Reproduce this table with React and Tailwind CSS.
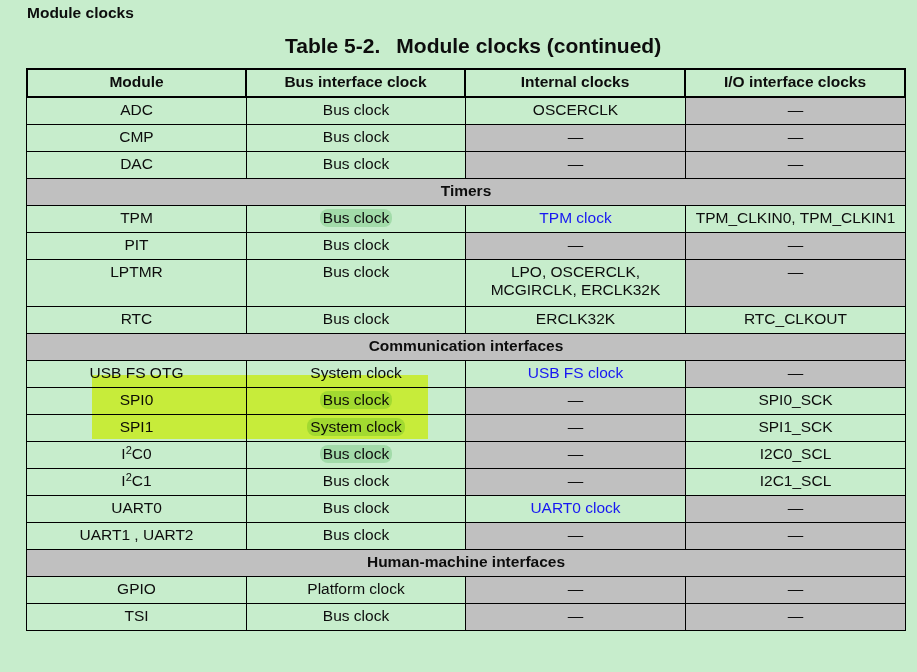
import React from "react";

const rows = [
  { c: [{ t: "ADC" }, { t: "Bus clock" }, { t: "OSCERCLK" }, { t: "—", g: 1 }] },
  { c: [{ t: "CMP" }, { t: "Bus clock" }, { t: "—", g: 1 }, { t: "—", g: 1 }] },
  { c: [{ t: "DAC" }, { t: "Bus clock" }, { t: "—", g: 1 }, { t: "—", g: 1 }] },
  { section: "Timers" },
  { c: [{ t: "TPM" }, { t: "Bus clock", pill: 1 }, { t: "TPM clock", b: 1 }, { t: "TPM_CLKIN0, TPM_CLKIN1" }] },
  { c: [{ t: "PIT" }, { t: "Bus clock" }, { t: "—", g: 1 }, { t: "—", g: 1 }] },
  {
    tall: 1,
    c: [
      { t: "LPTMR" },
      { t: "Bus clock" },
      { t: "LPO, OSCERCLK,", t2: "MCGIRCLK, ERCLK32K" },
      { t: "—", g: 1 },
    ],
  },
  { c: [{ t: "RTC" }, { t: "Bus clock" }, { t: "ERCLK32K" }, { t: "RTC_CLKOUT" }] },
  { section: "Communication interfaces" },
  { c: [{ t: "USB FS OTG" }, { t: "System clock" }, { t: "USB FS clock", b: 1 }, { t: "—", g: 1 }] },
  { c: [{ t: "SPI0" }, { t: "Bus clock", pill: 1 }, { t: "—", g: 1 }, { t: "SPI0_SCK" }] },
  { c: [{ t: "SPI1" }, { t: "System clock", pill: 1 }, { t: "—", g: 1 }, { t: "SPI1_SCK" }] },
  { c: [{ i2c: "0" }, { t: "Bus clock", pill: 1 }, { t: "—", g: 1 }, { t: "I2C0_SCL" }] },
  { c: [{ i2c: "1" }, { t: "Bus clock" }, { t: "—", g: 1 }, { t: "I2C1_SCL" }] },
  { c: [{ t: "UART0" }, { t: "Bus clock" }, { t: "UART0 clock", b: 1 }, { t: "—", g: 1 }] },
  { c: [{ t: "UART1 , UART2" }, { t: "Bus clock" }, { t: "—", g: 1 }, { t: "—", g: 1 }] },
  { section: "Human-machine interfaces" },
  { c: [{ t: "GPIO" }, { t: "Platform clock" }, { t: "—", g: 1 }, { t: "—", g: 1 }] },
  { c: [{ t: "TSI" }, { t: "Bus clock" }, { t: "—", g: 1 }, { t: "—", g: 1 }] },
];

function CellContent({ cell }) {
  if (cell.i2c) {
    return (
      <span>
        I<sup className="text-[11px] top-[-0.5em]">2</sup>C{cell.i2c}
      </span>
    );
  }
  if (cell.pill) {
    return <span className="inline-block rounded-[8px] bg-[#a2dba9] px-[3px]">{cell.t}</span>;
  }
  if (cell.t2) {
    return (
      <>
        <div>{cell.t}</div>
        <div>{cell.t2}</div>
      </>
    );
  }
  return <span className={cell.b ? "text-[#1717f2]" : ""}>{cell.t}</span>;
}

export default function App() {
  return (
    <div
      className="relative min-h-[672px] w-[917px] bg-[#c7edcc] text-[#0d0d0d] pt-[4px]"
      style={{ fontFamily: '"Liberation Sans", Arial, sans-serif' }}
    >
      <div className="pl-[27px] text-[15.5px] font-bold leading-[18px]">Module clocks</div>
      <div className="mt-[12px] pl-[285px] text-[21px] font-bold leading-[24px] whitespace-pre">
        Table 5-2.<span className="ml-[16px]">Module clocks (continued)</span>
      </div>

      <div className="ml-[26px] mt-[10px] w-[880px] text-[15.5px] leading-[18px]">
        <div className="grid h-[30px] grid-cols-[219px_219px_220px_218px] border-2 border-black font-bold">
          {["Module", "Bus interface clock", "Internal clocks", "I/O interface clocks"].map((h, i) => (
            <div key={h} className={`pt-[3px] text-center ${i < 3 ? "border-r-2 border-black" : ""}`}>
              {h}
            </div>
          ))}
        </div>
        <div className="border-x border-black">
          {rows.map((r, ri) =>
            r.section ? (
              <div
                key={ri}
                className="h-[27px] border-b border-black bg-[#c0c0c0] pt-[3px] text-center font-bold"
              >
                {r.section}
              </div>
            ) : (
              <div
                key={ri}
                className={`grid grid-cols-[220px_219px_220px_219px] border-b border-black ${
                  r.tall ? "h-[47px]" : "h-[27px]"
                }`}
              >
                {r.c.map((cell, ci) => (
                  <div
                    key={ci}
                    className={`pt-[3px] text-center ${ci < 3 ? "border-r border-black" : ""} ${
                      cell.g ? "bg-[#c0c0c0]" : ""
                    }`}
                  >
                    <CellContent cell={cell} />
                  </div>
                ))}
              </div>
            )
          )}
        </div>
      </div>

      <div className="pointer-events-none absolute left-[92px] top-[375px] h-[64px] w-[336px] bg-[#fffe48] mix-blend-multiply" />
    </div>
  );
}
